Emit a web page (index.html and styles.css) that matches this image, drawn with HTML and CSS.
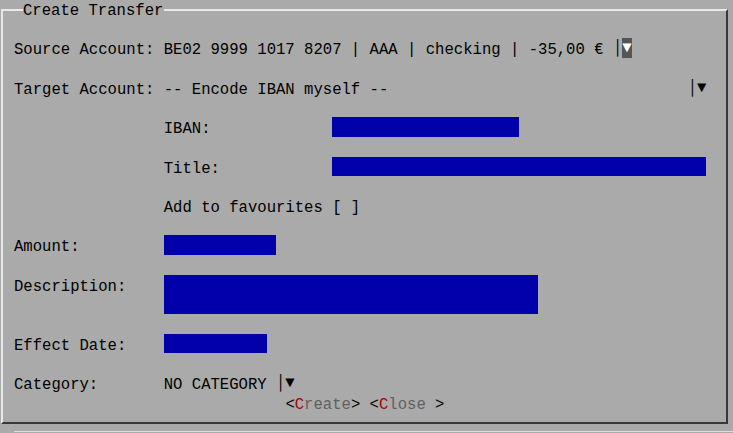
FILE: index.html
```html
<!DOCTYPE html>
<html>
<head>
<meta charset="utf-8">
<link rel="stylesheet" href="styles.css">
</head>
<body>
<div class="frame">
  <div class="title">Create Transfer</div>
  <div class="rows">
    <div class="row">
      <span class="label">Source Account:</span>
      <span class="text">BE02 9999 1017 8207 | AAA | checking | -35,00 € </span>
      <span class="cell">│</span><span class="cell focus">▼</span>
    </div>
    <div class="row">
      <span class="label">Target Account:</span>
      <span class="text wide">-- Encode IBAN myself --</span>
      <span class="cell">│</span><span class="cell">▼</span>
    </div>
    <div class="row indent">
      <span class="sublabel">IBAN:</span>
      <span class="edit w20"></span>
    </div>
    <div class="row indent">
      <span class="sublabel">Title:</span>
      <span class="edit w40"></span>
    </div>
    <div class="row indent">
      <span class="text">Add to favourites [ ]</span>
    </div>
    <div class="row">
      <span class="label">Amount:</span>
      <span class="edit w12"></span>
    </div>
    <div class="row tall">
      <span class="label">Description:</span>
      <span class="edit w40 h2"></span>
    </div>
    <div class="row">
      <span class="label">Effect Date:</span>
      <span class="edit w11"></span>
    </div>
    <div class="group">
      <div class="row">
        <span class="label">Category:</span>
        <span class="text">NO CATEGORY </span>
        <span class="cell">│</span><span class="cell">▼</span>
      </div>
      <div class="row buttons">
        <span class="btn">&lt;<span class="hot">C</span><span class="dim">reate</span>&gt;</span>
        <span class="btn">&lt;<span class="hot">C</span><span class="dim">lose</span> &gt;</span>
      </div>
    </div>
  </div>
</div>
<div class="shadow"></div>
</body>
</html>
```

FILE: styles.css
```css
html, body {
  margin: 0;
  padding: 0;
  background: #aaaaaa;
}

body {
  font-family: "Liberation Mono", "DejaVu Sans Mono", monospace;
  font-size: 15.6px;
  color: #000;
  width: 733px;
  height: 433px;
  overflow: hidden;
}

.frame {
  position: relative;
  margin: 9px 5px 0 1px;
  border-top: 2px solid #e8e8e8;
  border-left: 2px solid #e8e8e8;
  border-right: 2px solid #383838;
  border-bottom: 2px solid #383838;
  padding: 27.4px 0 9.2px 11px;
}

.title {
  position: absolute;
  top: -12px;
  left: 20px;
  height: 19.7px;
  line-height: 25px;
  padding-right: 1px;
  background: #aaaaaa;
  white-space: pre;
}

.rows {
  display: flex;
  flex-direction: column;
  gap: 19.7px;
}

.group {
  display: flex;
  flex-direction: column;
}

.row {
  display: flex;
  align-items: flex-start;
  height: 19.7px;
  line-height: 19.7px;
  white-space: pre;
}

.row.tall {
  height: 39.4px;
}

.row.indent {
  padding-left: 16ch;
}

.label,
.sublabel,
.text,
.btn {
  flex: none;
  line-height: 25px;
}

.label {
  width: 16ch;
}

.sublabel {
  width: 18ch;
}

.text.wide {
  width: 56ch;
}

.cell {
  display: inline-block;
  width: 1ch;
  text-align: center;
  flex: none;
  height: 19.7px;
  line-height: 21px;
}

.cell.focus {
  background: #555555;
  color: #ffffff;
}

.edit {
  display: block;
  height: 19.7px;
  background: #0000aa;
  flex: none;
}

.edit.h2 { height: 39.4px; }
.w11 { width: 11ch; }
.w12 { width: 12ch; }
.w20 { width: 20ch; }
.w40 { width: 40ch; }

.buttons {
  padding-left: 29ch;
  gap: 1ch;
}

.hot { color: #aa0000; }
.dim { color: #606060; }

.shadow {
  margin: 7px 0 0 14px;
  border-top: 1px solid #dcdcdc;
}
```
